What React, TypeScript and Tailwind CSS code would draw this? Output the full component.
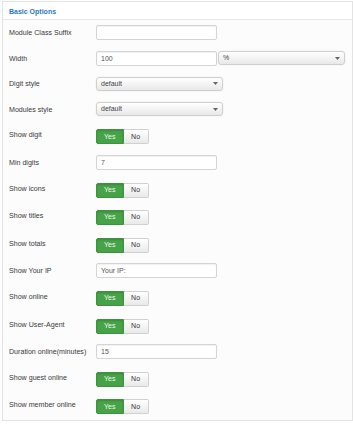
import React from "react";

type Row =
  | { label: string; kind: "input"; value?: string }
  | { label: string; kind: "select"; value: string }
  | { label: string; kind: "width" }
  | { label: string; kind: "toggle" };

const rows: Row[] = [
  { label: "Module Class Suffix", kind: "input", value: "" },
  { label: "Width", kind: "width" },
  { label: "Digit style", kind: "select", value: "default" },
  { label: "Modules style", kind: "select", value: "default" },
  { label: "Show digit", kind: "toggle" },
  { label: "Min digits", kind: "input", value: "7" },
  { label: "Show icons", kind: "toggle" },
  { label: "Show titles", kind: "toggle" },
  { label: "Show totals", kind: "toggle" },
  { label: "Show Your IP", kind: "input", value: "Your IP:" },
  { label: "Show online", kind: "toggle" },
  { label: "Show User-Agent", kind: "toggle" },
  { label: "Duration online(minutes)", kind: "input", value: "15" },
  { label: "Show guest online", kind: "toggle" },
  { label: "Show member online", kind: "toggle" },
];

function Input({ value }: { value?: string }) {
  return (
    <div className="w-[121px] h-[15px] border border-[#d4d4d4] rounded-[2px] bg-white shadow-[inset_0_1px_1px_rgba(0,0,0,0.06)] pl-[4px] text-[7px] leading-[13px] text-[#555]">
      {value}
    </div>
  );
}

function Select({ value, w }: { value: string; w: string }) {
  return (
    <div
      className={`${w} h-[14px] border border-[#cfcfcf] rounded-[3px] bg-gradient-to-b from-[#ffffff] via-[#f4f4f4] to-[#e8e8e8] shadow-[0_0_2px_rgba(0,0,0,0.08)] flex items-center justify-between pl-[4px] pr-[4px] text-[7px] text-[#444]`}
    >
      <span className="leading-[12px]">{value}</span>
      <svg width="5" height="3" viewBox="0 0 5 3" className="block">
        <path d="M0 0 L5 0 L2.5 3 Z" fill="#666" />
      </svg>
    </div>
  );
}

function Toggle() {
  return (
    <div className="mt-[2px] flex h-[15px] text-[7px]">
      <div className="w-[27.6px] h-full bg-[#47a348] border border-[#3f933f] rounded-l-[2px] text-[#eef7ee] flex items-center justify-center shadow-[inset_0_1px_2px_rgba(0,0,0,0.15)]">
        Yes
      </div>
      <div className="w-[25px] h-full bg-gradient-to-b from-[#ffffff] to-[#e9e9e9] border border-l-0 border-[#d0d0d0] rounded-r-[2px] text-[#333] flex items-center justify-center">
        No
      </div>
    </div>
  );
}

export default function App() {
  return (
    <div
      className="w-[353px] h-[430px] bg-white pl-[2px] pt-[1px]"
      style={{ fontFamily: '"Liberation Sans", Arial, sans-serif' }}
    >
      <div className="w-[351px] h-[420px] border border-[#e3e3e3] bg-[#fcfcfc]">
        <div className="h-[18px] border-b border-[#e6e6e6] pl-[6px] pt-[1px] text-[7px] font-bold leading-[17px] text-[#2a78c2] bg-white">
          Basic Options
        </div>
        <div className="pt-[5px]">
          {rows.map((r) => (
            <div key={r.label} className="flex items-start mb-[10.6px]">
              <div className="w-[93px] shrink-0 pl-[6px] pt-[1px] h-[15px] leading-[15px] text-[7.1px] text-[#3a3a3a] whitespace-nowrap">
                {r.label}
              </div>
              {r.kind === "input" && <Input value={r.value} />}
              {r.kind === "select" && (
                <div className="pt-[0.5px]">
                  <Select value={r.value} w="w-[127px]" />
                </div>
              )}
              {r.kind === "width" && (
                <div className="flex items-start">
                  <Input value="100" />
                  <div className="ml-[1px] pt-[0.5px]">
                    <Select value="%" w="w-[127px]" />
                  </div>
                </div>
              )}
              {r.kind === "toggle" && <Toggle />}
            </div>
          ))}
        </div>
      </div>
    </div>
  );
}
